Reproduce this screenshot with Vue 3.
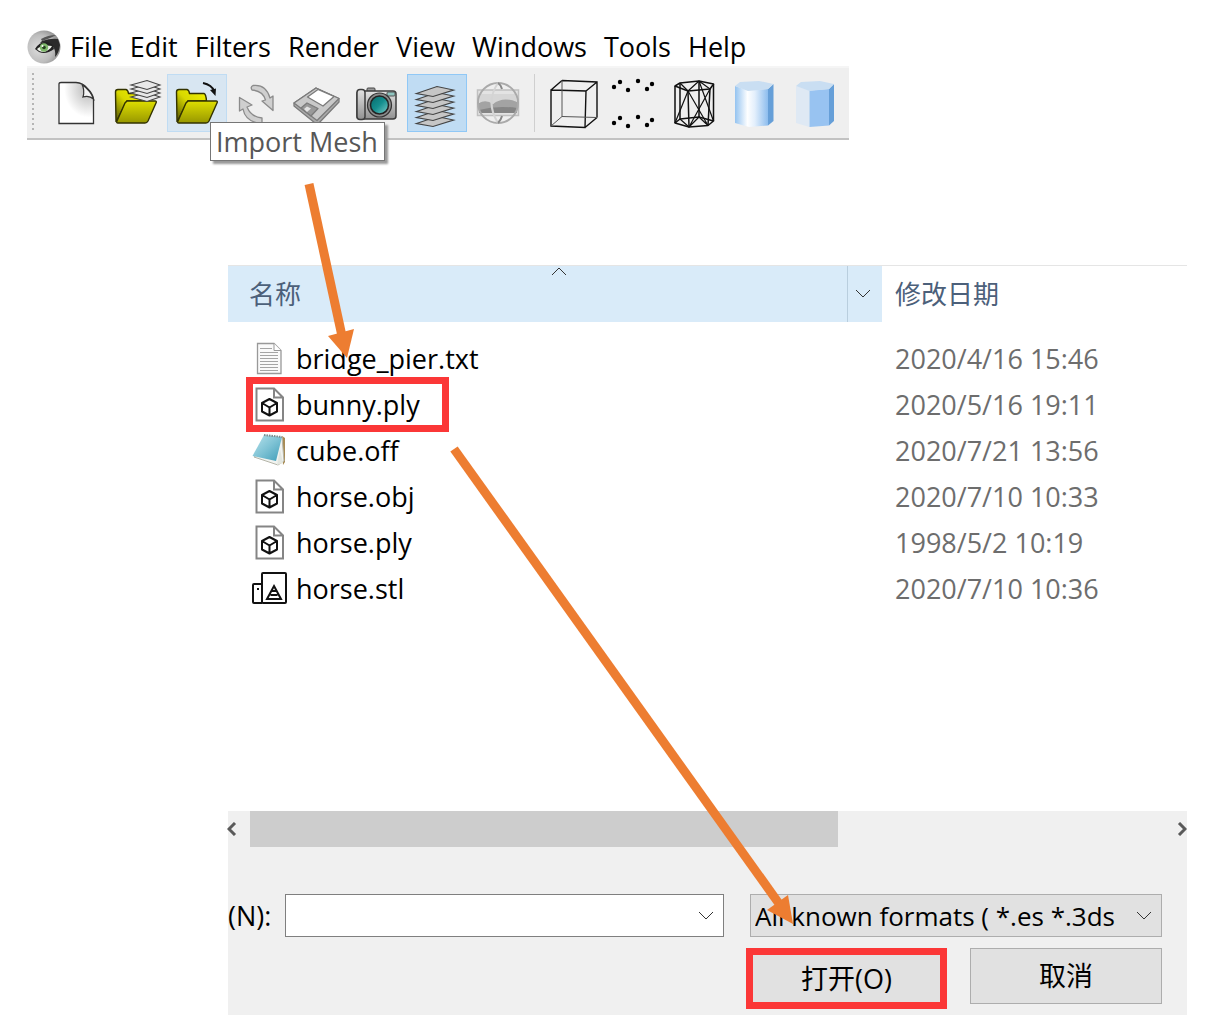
<script setup>
import { ref } from 'vue'

const menus = ['File', 'Edit', 'Filters', 'Render', 'View', 'Windows', 'Tools', 'Help']

const files = [
  { name: 'bridge_pier.txt', date: '2020/4/16 15:46', icon: 'text' },
  { name: 'bunny.ply', date: '2020/5/16 19:11', icon: 'model', marked: true },
  { name: 'cube.off', date: '2020/7/21 13:56', icon: 'notepad' },
  { name: 'horse.obj', date: '2020/7/10 10:33', icon: 'model' },
  { name: 'horse.ply', date: '1998/5/2 10:19', icon: 'model' },
  { name: 'horse.stl', date: '2020/7/10 10:36', icon: 'stl' },
]

const stack = [5, 4, 3, 2, 1, 0]
const smallStack = [3, 2, 1, 0]
const points = [[12, 13], [18, 8], [26, 16], [36, 7], [45, 15], [50, 10]]
const fileName = ref('')
</script>

<template>
  <main class="page">
    <header class="app">
      <nav class="menu">
        <svg class="logo" width="34" height="34" viewBox="0 0 34 34" aria-hidden="true">
          <defs>
            <radialGradient id="ball" cx="0.35" cy="0.55" r="0.7">
              <stop offset="0" stop-color="#dedede" />
              <stop offset="0.6" stop-color="#bdbdbd" />
              <stop offset="1" stop-color="#858585" />
            </radialGradient>
          </defs>
          <circle cx="17" cy="17" r="16.5" fill="url(#ball)" />
          <path d="M14 9 Q21 5 29 5 Q24 8 15 11Z" fill="#555" />
          <path d="M15 11 Q24 8 31 9 L33 15 Q32 23 28 27 Q29 20 26 17 Q22 12 13 13Z" fill="#2b2b2b" />
          <path d="M8 19 Q12 12 19 12 Q26 13 27 19 Q19 25 12 22Z" fill="#222" />
          <path d="M10 19 Q15 14 25 16 Q23 20 17 22 Q12 22 10 19Z" fill="#eef2ea" />
          <circle cx="17" cy="17.500" r="4.200" fill="#7fb86c" />
          <circle cx="17" cy="17.500" r="1.800" fill="#26401f" />
          <circle cx="15.500" cy="16" r="1" fill="#fff" />
        </svg>
        <a v-for="m in menus" :key="m" href="#">{{ m }}</a>
      </nav>

      <div class="toolbar">
        <span class="grip"></span>
        <button type="button" class="tool" aria-label="New">
          <svg viewBox="0 0 60 58">
            <defs>
              <radialGradient id="sheet" cx="0.85" cy="0.15" r="0.7">
                <stop offset="0" stop-color="#b5b5b5" />
                <stop offset="1" stop-color="#fff" />
              </radialGradient>
            </defs>
            <path d="M12 10 Q12 8.500 14 8.500 H29 Q36 9 40 14 Q46 20 46.500 25 V49.500 H12Z" fill="url(#sheet)" stroke="#333" stroke-width="1.300" />
            <path d="M35 10.500 Q38 16 36 23 Q42 21 46.500 25 Q44 17 35 10.500Z" fill="#f4f4f4" stroke="#333" stroke-width="1.200" />
          </svg>
        </button>
        <button type="button" class="tool" aria-label="Open Project">
          <svg viewBox="0 0 60 58">
            <defs>
              <linearGradient id="back" x1="0" y1="1" x2="1" y2="0">
                <stop offset="0" stop-color="#4b4b00" />
                <stop offset="0.5" stop-color="#d8d800" />
                <stop offset="1" stop-color="#f2f200" />
              </linearGradient>
              <linearGradient id="front" x1="0" y1="0" x2="0" y2="1">
                <stop offset="0" stop-color="#dede00" />
                <stop offset="1" stop-color="#979700" />
              </linearGradient>
            </defs>
            <path d="M9 48 L8.500 18 Q8.500 15.500 11 15.500 H19 Q21 16 21.500 19.500 H37 V27 H20Z" fill="url(#back)" stroke="#333300" stroke-width="1.400" />
            <path d="M20 27 H48 Q50 27 49 29 L41 47 Q40 49 38 49 H11 Q9 49 10 47 L18 29Z" fill="url(#front)" stroke="#333300" stroke-width="1.400" />
            <path v-for="i in smallStack" :key="i" d="M24 11 L40 6.500 L53 11 L40 15.500Z" :transform="`translate(0 ${i * 4})`" fill="#e8e8e8" stroke="#444" stroke-width="1.100" />
          </svg>
        </button>
        <button type="button" class="tool hot" aria-label="Import Mesh" aria-describedby="tip">
          <svg viewBox="0 0 60 58">
            <path d="M10 48 L9.500 18 Q9.500 15.500 12 15.500 H20 Q22 16 22.500 19.500 H37 Q39 20 39.500 27 H21Z" fill="url(#back)" stroke="#333300" stroke-width="1.400" />
            <path d="M21 27 H49 Q51 27 50 29 L42 47 Q41 49 39 49 H12 Q10 49 11 47 L19 29Z" fill="url(#front)" stroke="#333300" stroke-width="1.400" />
            <path d="M36 9 Q45 11 47 17" fill="none" stroke="#111" stroke-width="1.800" />
            <path d="M43 16 L49 14.500 L48.500 22Z" fill="#111" />
          </svg>
          <span id="tip" class="tip" role="tooltip">Import Mesh</span>
        </button>
        <button type="button" class="tool" aria-label="Reload">
          <svg viewBox="0 0 60 58" fill="#cfcfcf" stroke="#8b8b8b" stroke-width="1.300" stroke-linejoin="round">
            <path d="M26 11.500 Q39 10 43 24 L46 22 V36.500 L35 27 L38.500 26 Q36 17 25 16 Q23 13 26 11.500Z" />
            <path d="M12.500 23.500 L25 31 L20 33 Q24 43 35 44 V49 H30 Q18 46 16 35 L12.500 37Z" />
          </svg>
        </button>
        <button type="button" class="tool" aria-label="Save">
          <svg viewBox="0 0 60 58" stroke="#7b7b7b" stroke-width="1.300" stroke-linejoin="round">
            <path d="M7 29 L29 14 L52 24.500 V28 L31 50 L28 49 L7 32Z" fill="#aaa" />
            <path d="M7 29 L29 14 L52 24.500 L30 46.500Z" fill="#c9c9c9" />
            <path d="M20.500 23 L31 15.500 L47 22.500 L36 32Z" fill="#fff" />
            <path d="M14 34 L20 29 L31 34.500 L24 42Z" fill="#999" />
            <path d="M17 35 L20 32.500 L24 34.500 L20 38Z" fill="#e2e2e2" stroke="none" />
          </svg>
        </button>
        <button type="button" class="tool" aria-label="Snapshot">
          <svg viewBox="0 0 60 58">
            <defs>
              <linearGradient id="cam" x1="0" y1="0" x2="0" y2="1">
                <stop offset="0" stop-color="#e3e3e3" />
                <stop offset="1" stop-color="#919191" />
              </linearGradient>
              <linearGradient id="lens" x1="0" y1="0" x2="1" y2="1">
                <stop offset="0" stop-color="#06696a" />
                <stop offset="0.500" stop-color="#158f8f" />
                <stop offset="1" stop-color="#7fd0cc" />
              </linearGradient>
            </defs>
            <rect x="20" y="14" width="8" height="4" rx="1" fill="#999" stroke="#444" />
            <rect x="10" y="17" width="39" height="28" rx="3" fill="url(#cam)" stroke="#3d3d3d" stroke-width="1.500" />
            <rect x="10" y="15.500" width="8" height="30" rx="3" fill="url(#cam)" stroke="#3d3d3d" stroke-width="1.500" />
            <rect x="40" y="18" width="8" height="4" rx="1" fill="#8fc5c0" stroke="#555" />
            <circle cx="32.500" cy="31" r="12" fill="#8b8b8b" stroke="#333" stroke-width="1.200" />
            <circle cx="32.500" cy="31" r="9" fill="url(#lens)" stroke="#222" stroke-width="1.500" />
          </svg>
        </button>
        <button type="button" class="tool on" aria-label="Layer Dialog" aria-pressed="true">
          <svg viewBox="0 0 60 58">
            <path v-for="i in stack" :key="i" d="M9.500 19.500 L30 12.500 L46.500 16 L26 22.500Z" :transform="`translate(0 ${i * 6})`" fill="#c6c6c6" stroke="#444" stroke-width="1.200" />
          </svg>
        </button>
        <button type="button" class="tool" aria-label="Raster">
          <svg viewBox="0 0 60 58">
            <rect x="10.500" y="16" width="41" height="25.500" fill="#e3e3e3" stroke="#c0c0c0" stroke-width="1.500" />
            <rect x="13" y="20" width="36" height="9" fill="#d6d6d6" />
            <path d="M12 29 Q19 25 26 30 Q36 22 50 28 V39 H12Z" fill="#a3a3a3" />
            <path d="M12 36 Q30 31 50 34 V39 H12Z" fill="#858585" />
            <circle cx="31" cy="29" r="20" fill="none" stroke="#aaa" stroke-width="2" />
            <path d="M31 9 Q18 28 31 49" fill="none" stroke="#d4d4d4" stroke-width="2" />
            <path d="M31 9 Q34 11 35 15 M31 49 Q34 46 35 42" fill="none" stroke="#888" stroke-width="2" />
          </svg>
        </button>
        <span class="divider"></span>
        <button type="button" class="tool" aria-label="Bounding Box">
          <svg viewBox="0 0 60 58" fill="none" stroke="#111" stroke-width="1.400">
            <path d="M9 16 L44 17 L43 53.500 L9 52Z M20 6.500 L55 8 V43.500 M9 16 L20 6.500 M44 17 L55 8 M43 53.500 L55 43.500" />
            <path d="M20 6.500 V42.500 L55 43.500 M9 52 L20 42.500" stroke="#555" stroke-width="1" />
          </svg>
        </button>
        <button type="button" class="tool" aria-label="Points">
          <svg viewBox="0 0 60 58">
            <g v-for="p in points" :key="p[0]">
              <circle :cx="p[0]" :cy="p[1]" r="2.200" />
              <circle :cx="p[0]" :cy="p[1] + 36" r="2.200" />
            </g>
          </svg>
        </button>
        <button type="button" class="tool" aria-label="Wireframe">
          <svg viewBox="0 0 60 58" fill="none" stroke="#111" stroke-width="1.500" stroke-linejoin="round">
            <path d="M13 12 L18 9 L37 7 L51.500 10 L48 15 L26 17Z M13 49 L18 45 L37 43 L51.500 47 L46 51.500 L27 53Z" />
            <path d="M13 12 V49 M18 9 V45 M37 7 V43 M51.500 10 V47 M48 15 L46 51.500 M26 17 L27 53" />
            <path d="M18 9 L26 17 L37 7 L48 15 M26 17 L13 49 M26 17 L46 51.500 M48 15 L27 53 M37 7 L51.500 47 M18 45 L27 53 L37 43 L46 51.500" stroke-width="1.200" />
          </svg>
        </button>
        <button type="button" class="tool" aria-label="Smooth">
          <svg viewBox="0 0 60 58">
            <defs>
              <linearGradient id="smooth">
                <stop offset="0" stop-color="#94c3f0" />
                <stop offset="0.380" stop-color="#fdfeff" />
                <stop offset="0.600" stop-color="#e3effc" />
                <stop offset="1" stop-color="#8dbdee" />
              </linearGradient>
            </defs>
            <path d="M46 15 L51.500 10 V47 L46 51.500Z" fill="#669fd8" />
            <path d="M13 12 L26 16.500 L46 15 V51.500 L27 53 L13 49Z" fill="url(#smooth)" />
            <path d="M13 12 L18 8 L37 7 L51.500 10 L46 15 L26 17Z" fill="#c9def2" />
          </svg>
        </button>
        <button type="button" class="tool" aria-label="Flat">
          <svg viewBox="0 0 60 58">
            <path d="M14 12 L27.500 16.500 V53 L14 49Z" fill="#dfe9f4" />
            <path d="M27.500 16.500 L47 15 V51.500 L27.500 53Z" fill="#98c3f1" />
            <path d="M47 15 L52 10 V47 L47 51.500Z" fill="#669fd8" />
            <path d="M14 12 L19 8 L38 7 L52 10 L47 15 L27.500 17Z" fill="#c9def2" />
          </svg>
        </button>
      </div>
    </header>

    <section class="dialog">
      <div class="list">
        <table>
          <thead>
            <tr>
              <th class="name-head" scope="col">
                <div class="head-cell">
                  <span class="head-text">名称</span>
                  <svg class="sort" width="16" height="10" viewBox="0 0 16 10" aria-hidden="true"><path d="M1 9 L8 2 L15 9" /></svg>
                  <button type="button" class="filter" aria-label="名称">
                    <svg width="16" height="10" viewBox="0 0 16 10"><path d="M1 1 L8 8 L15 1" /></svg>
                  </button>
                </div>
              </th>
              <th class="date-head" scope="col">修改日期</th>
            </tr>
          </thead>
          <tbody>
            <tr v-for="f in files" :key="f.name">
              <td>
                <div class="file" :class="{ marked: f.marked }">
                  <svg v-if="f.icon === 'text'" width="36" height="36" viewBox="0 0 36 36">
                    <path d="M5.500 2.500 H22 L29 9.500 V32.500 H5.500Z" fill="#fafafa" stroke="#999" stroke-width="1.300" />
                    <path d="M22 2.500 V9.500 H29" fill="#fff" stroke="#999" />
                    <path d="M8 7.500 H20 M8 11.500 H26 M8 14.500 H26 M8 17.500 H26 M8 20.500 H26 M8 23.500 H26 M8 26.500 H26 M8 29.500 H26" stroke="#a5a5a5" />
                  </svg>
                  <svg v-else-if="f.icon === 'model'" width="36" height="36" viewBox="0 0 36 36" fill="none">
                    <path d="M4.500 1.500 H22 L31 10.500 V33.500 H4.500Z M22 1.500 V10.500 H31" fill="#fff" stroke="#858585" stroke-width="2" />
                    <path d="M17.500 12 L25 16 V24.500 L17.500 28.500 L10 24.500 V16Z M10 16 L17.500 20.500 L25 16 M17.500 20.500 V28.500" stroke="#111" stroke-width="2" stroke-linejoin="round" />
                  </svg>
                  <svg v-else-if="f.icon === 'notepad'" width="36" height="36" viewBox="0 0 36 36">
                    <defs>
                      <linearGradient id="pad" x1="0" y1="0" x2="1" y2="1">
                        <stop offset="0" stop-color="#b9e3ec" />
                        <stop offset="0.500" stop-color="#7fc3d5" />
                        <stop offset="1" stop-color="#3f9db8" />
                      </linearGradient>
                    </defs>
                    <path d="M30 3 L33 5 V29 L31 32Z" fill="#a88b54" />
                    <path d="M30 4 L32 28 L26 32 L2 24Z" fill="#f1f3f0" stroke="#b5b5a8" />
                    <path d="M12 2 L30 4 L24 28 L0.500 23Z" fill="url(#pad)" />
                    <path d="M28 16 L31 30 L25 32Z" fill="#e3e6df" />
                    <path d="M12 2 L30 4" stroke="#7d8c8f" stroke-width="2" stroke-dasharray="1.500 1" />
                  </svg>
                  <svg v-else width="36" height="36" viewBox="0 0 36 36" fill="none" stroke="#111" stroke-width="2">
                    <rect x="10" y="2" width="24" height="30" rx="1" />
                    <path d="M10 13 H2 Q1 13 1 14 V31 Q1 32 2 32 H10 M5 18 H7" />
                    <path d="M22 15 L29 28 H15Z M18.500 24 H25.500 M20 20 H24" />
                  </svg>
                  <span>{{ f.name }}</span>
                </div>
              </td>
              <td class="date">{{ f.date }}</td>
            </tr>
          </tbody>
        </table>
      </div>

      <div class="panel">
        <div class="scroll">
          <button type="button" class="step" aria-label="Left">
            <svg width="10" height="14" viewBox="0 0 10 14"><path d="M8 1 L2 7 L8 13" /></svg>
          </button>
          <span class="thumb"></span>
          <span class="rest"></span>
          <button type="button" class="step end" aria-label="Right">
            <svg width="10" height="14" viewBox="0 0 10 14"><path d="M2 1 L8 7 L2 13" /></svg>
          </button>
        </div>

        <form class="form" @submit.prevent>
          <div class="row">
            <label for="name">(N):</label>
            <div class="combo">
              <input id="name" v-model="fileName" type="text" />
              <svg width="16" height="10" viewBox="0 0 16 10" aria-hidden="true"><path d="M1 1 L8 8 L15 1" /></svg>
            </div>
            <div class="combo type">
              <select aria-label="All known formats">
                <option>All known formats ( *.es *.3ds</option>
              </select>
              <svg width="16" height="10" viewBox="0 0 16 10" aria-hidden="true"><path d="M1 1 L8 8 L15 1" /></svg>
            </div>
          </div>
          <div class="actions">
            <button type="submit" class="open">打开(O)</button>
            <button type="button" class="cancel">取消</button>
          </div>
        </form>
      </div>
    </section>

    <svg class="arrows" width="1216" height="1034" viewBox="0 0 1216 1034" aria-hidden="true">
      <path d="M309 184 L342 336" />
      <path d="M454 449 L780 905" />
      <polygon points="328,336 354,329 347,358" />
      <polygon points="767,910 788,895 793,924" />
    </svg>
  </main>
</template>

<style>
body {
  margin: 0;
  background: #fff;
}
</style>

<style scoped>
.page {
  position: relative;
  box-sizing: border-box;
  padding: 28px 29px 19px 27px;
  overflow: hidden;
  font-family: "Open Sans", "Noto Sans CJK SC", sans-serif;
  font-size: 27px;
  line-height: 36px;
  color: #000;
}

button,
input,
select {
  box-sizing: border-box;
  margin: 0;
  padding: 0;
  border: 0;
  border-radius: 0;
  background: none;
  font: inherit;
  color: inherit;
}

svg {
  display: block;
}

.app {
  width: fit-content;
}

.menu {
  display: flex;
  align-items: center;
  gap: 17px;
  height: 38px;
}

.menu a {
  color: #000;
  text-decoration: none;
}

.logo {
  margin-right: -8px;
}

.toolbar {
  display: flex;
  align-items: center;
  height: 70px;
  padding-right: 7px;
  border-top: 2px solid #f5f5f5;
  border-bottom: 2px solid #c2c2c2;
  background: #efefef;
}

.grip {
  width: 2px;
  height: 60px;
  margin: 0 13px 0 5px;
  background: repeating-linear-gradient(#b5b5b5 0 2px, transparent 2px 5px);
}

.tool {
  position: relative;
  width: 60px;
  height: 58px;
}

.tool > svg {
  width: 100%;
  height: 100%;
}

.tool.hot {
  background: #d8e6f2;
  box-shadow: inset 0 0 0 1px #c0dcf3;
}

.tool.on {
  background: #c0dcf3;
  box-shadow: inset 0 0 0 1px #90c8f6;
}

.divider {
  width: 1px;
  height: 58px;
  margin: 0 7px;
  background: #cfcfcf;
}

.tip {
  position: absolute;
  z-index: 1;
  top: 48px;
  left: 43px;
  padding: 0 6px 0 5px;
  border: 1px solid #767676;
  background: #fff;
  box-shadow: 3px 3px 2px #999;
  color: #575757;
  line-height: 37px;
  white-space: nowrap;
}

.dialog {
  margin: 125px 0 0 201px;
}

.list {
  min-height: 546px;
  border-top: 1px solid #e5e5e5;
  box-sizing: border-box;
}

table {
  width: 100%;
  border-collapse: collapse;
  table-layout: fixed;
}

th {
  height: 56px;
  padding: 0;
  font-size: 26px;
  font-weight: 400;
  text-align: left;
  color: #4c607a;
}

.name-head {
  width: 654px;
  background: #d9ebf9;
}

.head-cell {
  position: relative;
  display: flex;
  align-items: center;
  height: 56px;
}

.head-text {
  flex: 1;
  padding-left: 21px;
}

.sort {
  position: absolute;
  top: 0;
  left: 323px;
}

.sort,
.filter svg,
.combo svg {
  fill: none;
  stroke: #333;
  stroke-width: 1;
}

.filter {
  display: flex;
  justify-content: center;
  align-items: center;
  width: 35px;
  height: 56px;
  padding-right: 4px;
  border-left: 1px solid #b9cede;
}

.date-head {
  padding-left: 13px;
}

tbody::before {
  content: "";
  display: block;
  height: 14px;
}

td {
  height: 46px;
  padding: 0;
}

.file {
  position: relative;
  display: flex;
  align-items: center;
  gap: 8px;
  padding-left: 24px;
}

.marked::after {
  content: "";
  position: absolute;
  top: -10px;
  left: 18px;
  width: 189px;
  height: 41px;
  border: 7px solid #fb3737;
}

.date {
  padding-left: 13px;
  color: #6d6d6d;
}

.panel {
  background: #f0f0f0;
}

.scroll {
  display: flex;
  height: 36px;
}

.step {
  width: 22px;
}

.step svg {
  margin-left: -1px;
  fill: none;
  stroke: #5a5a5a;
  stroke-width: 3;
}

.step.end svg {
  margin: 0 0 0 auto;
}

.thumb {
  flex: 9;
  background: #cdcdcd;
}

.rest {
  flex: 5;
}

.form {
  padding: 47px 25px 6px 0;
}

.row {
  display: flex;
  align-items: center;
}

.row label {
  width: 57px;
}

.combo {
  position: relative;
  flex: 1;
  height: 43px;
}

.combo.type {
  flex: 0 0 412px;
  margin-left: 26px;
}

.combo input,
.combo select {
  display: block;
  width: 100%;
  height: 43px;
  padding: 0 36px 0 4px;
  border: 1px solid #7f7f7f;
  background: #fff;
}

.combo select {
  appearance: none;
  border-color: #adadad;
  background: #e1e1e1;
  font-size: 26px;
}

.combo svg {
  position: absolute;
  top: 17px;
  right: 10px;
}

.actions {
  display: flex;
  justify-content: flex-end;
  align-items: flex-start;
  gap: 23px;
  margin-top: 11px;
}

.open {
  width: 201px;
  height: 61px;
  border: 7px solid #fb3737;
  background: #e1e1e1;
}

.cancel {
  width: 192px;
  height: 56px;
  border: 1px solid #adadad;
  background: #e1e1e1;
}

.arrows {
  position: absolute;
  top: 0;
  left: 0;
  z-index: 2;
  pointer-events: none;
  fill: #ed7d31;
}

.arrows path {
  stroke: #ed7d31;
  stroke-width: 9;
}
</style>
